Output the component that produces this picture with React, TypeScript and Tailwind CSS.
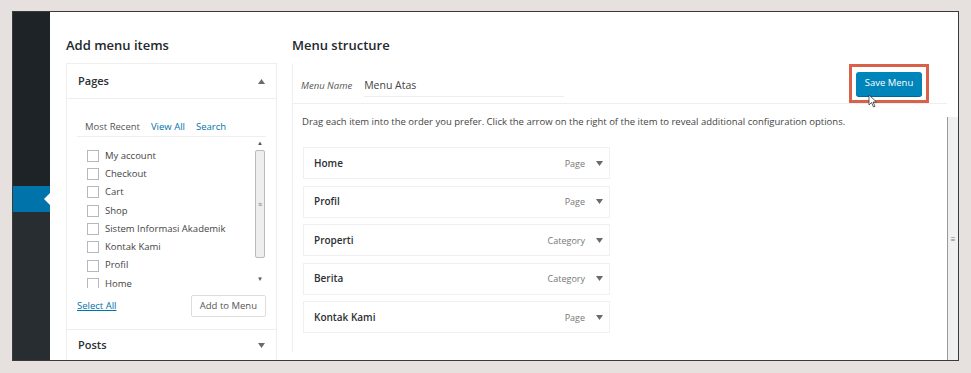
const font = { fontFamily: '"Open Sans", "Noto Sans", sans-serif' };

const pages = [
  "My account",
  "Checkout",
  "Cart",
  "Shop",
  "Sistem Informasi Akademik",
  "Kontak Kami",
  "Profil",
  "Home",
];

const menuItems = [
  { title: "Home", type: "Page" },
  { title: "Profil", type: "Page" },
  { title: "Properti", type: "Category" },
  { title: "Berita", type: "Category" },
  { title: "Kontak Kami", type: "Page" },
];

function Caret({ up = false }: { up?: boolean }) {
  return (
    <svg width="7" height="5" viewBox="0 0 7 5" className="fill-[#6b6b6b]">
      {up ? <path d="M0 5 L3.5 0 L7 5 Z" /> : <path d="M0 0 L7 0 L3.5 5 Z" />}
    </svg>
  );
}

function Sidebar() {
  return (
    <div className="relative flex w-[37px] shrink-0 flex-col">
      <div className="h-[174px] shrink-0 bg-[#1d2327]" />
      <div className="relative h-[26px] shrink-0 bg-[#0073aa]">
        <div className="absolute right-0 top-[7px] h-0 w-0 border-y-[6px] border-r-[6px] border-y-transparent border-r-white" />
      </div>
      <div className="flex-1 bg-[#282d31]" />
    </div>
  );
}

function AddMenuItems() {
  return (
    <div className="flex w-[211px] shrink-0 flex-col">
      <h2 className="h-[26px] shrink-0 text-[13px] font-semibold leading-[16px] text-[#23282d]">
        Add menu items
      </h2>
      <div className="shrink-0 border border-[#eeeeee]">
        <div className="flex h-[34px] items-center justify-between px-[11px]">
          <span className="text-[11px] font-semibold text-[#2b2f33]">Pages</span>
          <Caret up />
        </div>
        <div className="border-t border-[#eeeeee] px-[10px] pb-[12px] pt-[21px]">
          <div className="flex gap-[11px] pl-[8px] text-[9.5px]">
            <span className="text-[#555]">Most Recent</span>
            <span className="text-[#0073aa]">View All</span>
            <span className="text-[#0073aa]">Search</span>
          </div>
          <div className="mt-[2px] flex h-[152px] border-t border-[#eeeeee]">
            <div className="flex flex-1 flex-col gap-[5.3px] overflow-hidden pl-[10px] pt-[12px]">
              {pages.map((p) => (
                <div key={p} className="flex h-[13px] shrink-0 items-center gap-[6px]">
                  <span className="h-[12px] w-[12px] shrink-0 border border-[#b4b9be] bg-white" />
                  <span className="text-[9.5px] text-[#444]">{p}</span>
                </div>
              ))}
            </div>
            <div className="flex w-[12px] flex-col items-center">
              <span className="mt-[3px] text-[6px] leading-none text-[#555]">▲</span>
              <div className="mt-[4px] flex h-[108px] w-[10px] items-center justify-center rounded-[2px] border border-[#bbbbbb] bg-[#eeeeee]">
                <span className="text-[7px] leading-none text-[#777]">≡</span>
              </div>
              <span className="mt-auto mb-[6px] text-[6px] leading-none text-[#555]">▼</span>
            </div>
          </div>
          <div className="mt-[7px] flex items-center justify-between">
            <span className="text-[9.5px] text-[#0073aa] underline">Select All</span>
            <button className="h-[22px] rounded-[2px] border border-[#dddddd] bg-white px-[8px] text-[9.5px] text-[#555]">
              Add to Menu
            </button>
          </div>
        </div>
        <div className="flex h-[31px] items-center justify-between border-t border-[#eeeeee] px-[11px]">
          <span className="text-[11px] font-semibold text-[#2b2f33]">Posts</span>
          <Caret />
        </div>
        <div className="h-[20px]" />
      </div>
    </div>
  );
}

function MenuStructure() {
  return (
    <div className="flex flex-1 flex-col">
      <h2 className="h-[27px] shrink-0 text-[13px] font-semibold leading-[16px] text-[#23282d]">
        Menu structure
      </h2>
      <div className="flex flex-1 flex-col border-l border-[#eeeeee]">
        <div className="flex h-[40px] shrink-0 items-center border-b border-[#eeeeee] pl-[8px] pr-[18px]">
          <div className="flex items-center pt-[5px]">
            <span className="text-[9.5px] italic text-[#555]">Menu Name</span>
            <span className="ml-[12px] w-[200px] border-b border-[#eeeeee] py-[3px] text-[10.5px] text-[#444]">
              Menu Atas
            </span>
          </div>
          <div className="ml-auto flex h-[39px] w-[80px] items-center justify-center border-[3px] border-[#d9614a]">
            <button className="relative h-[24px] rounded-[3px] bg-[#0085ba] px-[9px] text-[9.5px] text-white shadow-[0_1px_0_#006799]">
              Save Menu
              <svg
                width="10"
                height="14"
                viewBox="0 0 10 14"
                className="absolute left-[12px] top-[22px]"
              >
                <path d="M1 1 L1 11 L3.5 8.5 L5.5 13 L7 12.3 L5 8 L8.5 8 Z" fill="white" stroke="#333" strokeWidth="0.8" />
              </svg>
            </button>
          </div>
        </div>
        <p className="shrink-0 pl-[9px] pt-[11px] text-[9.5px] text-[#444]">
          Drag each item into the order you prefer. Click the arrow on the right of the item to reveal additional
          configuration options.
        </p>
        <div className="mt-[18px] flex w-[317px] shrink-0 flex-col gap-[6.5px] pl-[10px]">
          {menuItems.map((m) => (
            <div
              key={m.title}
              className="flex h-[32px] items-center justify-between border border-[#f0f0f0] bg-white pl-[10px] pr-[6px]"
            >
              <span className="text-[10px] font-semibold text-[#2b2f33]">{m.title}</span>
              <div className="flex items-center gap-[11px]">
                <span className="text-[9px] text-[#777]">{m.type}</span>
                <Caret />
              </div>
            </div>
          ))}
        </div>
      </div>
    </div>
  );
}

export default function App() {
  return (
    <div className="h-[373px] w-[971px] overflow-hidden bg-[#e6e1df] pl-[12px] pt-[11px]" style={font}>
      <div className="flex h-[350px] w-[947px] overflow-hidden border border-[#3a3a3a] bg-white">
        <Sidebar />
        <div className="flex min-h-0 flex-1 gap-[15px] overflow-hidden pb-[8px] pl-[16px] pt-[25px]">
          <AddMenuItems />
          <MenuStructure />
        </div>
        <div className="flex w-[11px] shrink-0 flex-col">
          <div className="h-[105px] shrink-0" />
          <div className="flex flex-1 items-center justify-center border-l border-[#999] bg-[#f0f0f0]">
            <span className="text-[8px] leading-none text-[#777]">≡</span>
          </div>
        </div>
      </div>
    </div>
  );
}
